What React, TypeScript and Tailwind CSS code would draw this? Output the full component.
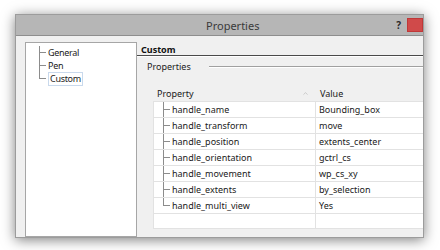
import { ChevronUp } from "lucide-react";

const rows = [
  ["handle_name", "Bounding_box"],
  ["handle_transform", "move"],
  ["handle_position", "extents_center"],
  ["handle_orientation", "gctrl_cs"],
  ["handle_movement", "wp_cs_xy"],
  ["handle_extents", "by_selection"],
  ["handle_multi_view", "Yes"],
];

const TreeLine = ({ last }: { last: boolean }) => (
  <div className="flex flex-col w-[7px] h-full shrink-0">
    <div className="flex-1 border-l border-b border-[#8c8c8c]" />
    <div className={last ? "flex-1" : "flex-1 border-l border-[#8c8c8c]"} />
  </div>
);

const App = () => {
  return (
    <div className="w-[440px] h-[250px] bg-white pl-[15px] pt-[14px] font-['Noto_Sans',sans-serif] overflow-hidden">
      <div className="w-[409px] h-[224px] flex flex-col bg-[#f0f0f0] border border-[#9c9c9c] shadow-[0_2px_12px_rgba(0,0,0,0.5)]">
        {/* title bar */}
        <div className="h-[21px] shrink-0 flex items-center bg-[#b6b6b6] border-b border-[#8e8e8e]">
          <span className="ml-[190px] text-[11px] text-[#3a3a3a] leading-none">Properties</span>
          <div className="flex-1" />
          <span className="text-[10px] font-bold text-[#2a2a2a] leading-none mr-[6px]">?</span>
          <div className="w-[16px] h-[14px] bg-[#d04a4a] border border-[#c03838]" />
        </div>

        {/* body */}
        <div className="flex-1 flex min-h-0">
          <div className="w-[121px] pl-[9px] pt-[6px] shrink-0 flex">
            <div className="flex-1 bg-white border border-[#a6a6a6] pt-[3px] pl-[13px] text-[9px] text-[#1a1a1a] tracking-[-0.3px]">
              <div className="flex h-[39px]">
                <div className="flex flex-col w-[7px] shrink-0">
                  <div className="h-[7px] border-l border-b border-[#8c8c8c]" />
                  <div className="h-[13px] border-l border-b border-[#8c8c8c]" />
                  <div className="h-[13px] border-l border-b border-[#8c8c8c]" />
                </div>
                <div className="flex flex-col pl-[2px]">
                  <div className="h-[13px] flex items-center">General</div>
                  <div className="h-[13px] flex items-center">Pen</div>
                  <div className="h-[13px] flex items-center">
                    <span className="border border-[#c9d9ec] px-[1px] leading-[12px]">Custom</span>
                  </div>
                </div>
              </div>
            </div>
          </div>

          <div className="flex-1 flex flex-col min-w-0">
            <div className="h-[19px] shrink-0 flex items-end pl-[4px] pb-[1px] text-[9px] font-bold text-[#111] leading-none">
              Custom
            </div>
            <div className="shrink-0 border-t border-[#4a4a4a] border-b border-b-white" />
            <div className="mt-[4px] h-[12px] shrink-0 flex items-center pl-[10px] text-[9px] text-[#222]">
              <span>Properties</span>
              <div className="flex-1 ml-[18px] border-t border-[#a0a0a0] border-b border-b-white" />
            </div>

            <div className="mt-[13px] ml-[16px] flex flex-col text-[9px] text-[#1a1a1a]">
              <div className="h-[15px] flex items-center">
                <div className="w-[163px] flex items-center pl-[4px]">
                  <span className="flex-1">Property</span>
                  <ChevronUp className="w-[7px] h-[7px] text-[#b0b0b0] mr-[7px]" strokeWidth={2} />
                </div>
                <div className="pl-[4px]">Value</div>
              </div>
              {rows.map(([k, v], i) => (
                <div key={k} className="h-[16px] flex bg-white border-t border-l border-[#e2e2e2]">
                  <div className="w-[162px] flex items-stretch pl-[9px] border-r border-[#e2e2e2]">
                    <TreeLine last={i === rows.length - 1} />
                    <span className="pl-[2px] flex items-center">{k}</span>
                  </div>
                  <div className="flex items-center pl-[3px]">{v}</div>
                </div>
              ))}
              <div className="h-[16px] flex bg-white border-t border-l border-b border-[#e2e2e2]">
                <div className="w-[162px] border-r border-[#e2e2e2]" />
              </div>
            </div>
          </div>
        </div>
      </div>
    </div>
  );
};

export default App;
